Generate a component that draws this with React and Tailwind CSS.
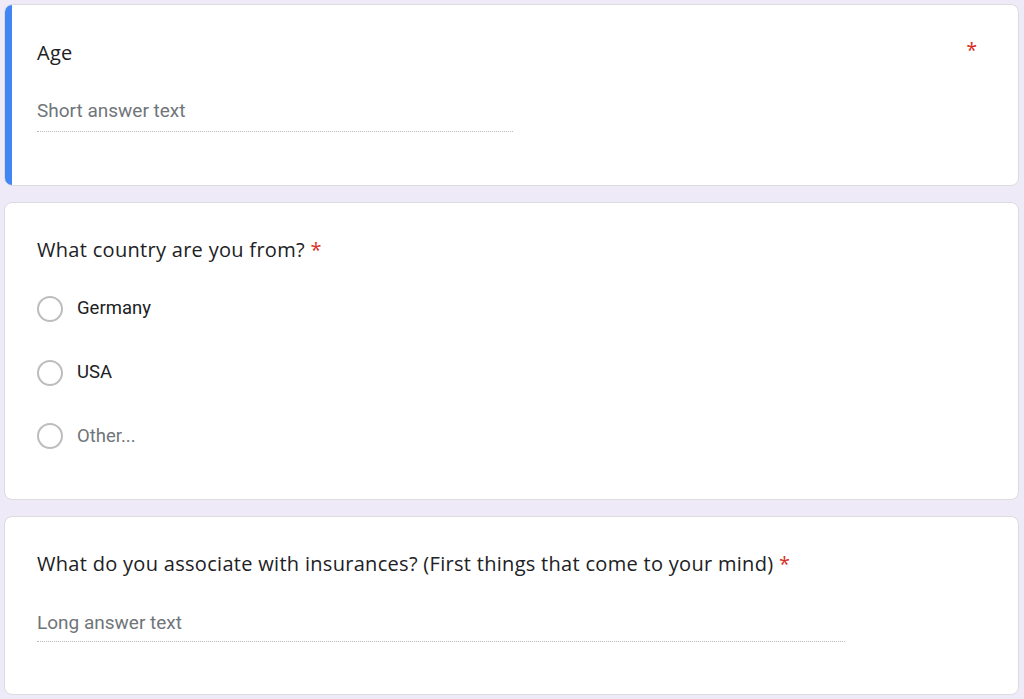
export default function App() {
  const title = "text-[20px] tracking-[0.3px] leading-6 text-[#202124] font-['Open_Sans',sans-serif]";
  const star = "text-[#d93025]";
  const hint = "text-[19px] leading-6 text-[#70757a] font-['Roboto',sans-serif]";

  return (
    <div className="min-h-screen bg-[#eeeaf7] px-1 pt-1 pb-1 pr-[5px] flex flex-col gap-4">
      {/* Age */}
      <div className="relative bg-white rounded-lg border border-[#dadce0] h-[182px] overflow-hidden">
        <div className="absolute left-0 top-0 bottom-0 w-[7px] bg-[#4285f4]" />
        <div className="pl-[32px] pr-10 pt-[36px] flex justify-between">
          <div className={title}>Age</div>
          <div className={`${star} text-[19px] leading-6 -mt-[3px] mr-[1px]`}>*</div>
        </div>
        <div className="pl-[32px] mt-[34px]">
          <div className="w-[476px] border-b border-dotted border-[#bdbdbd] pb-[8px]">
            <span className={hint}>Short answer text</span>
          </div>
        </div>
      </div>

      {/* Country */}
      <div className="bg-white rounded-lg border border-[#dadce0] h-[298px]">
        <div className="pl-[32px] pt-[35px]">
          <div className={title}>
            What country are you from? <span className={star}>*</span>
          </div>
        </div>
        <div className="pl-[32px] pt-[33px] flex flex-col gap-[36px]">
          {["Germany", "USA", "Other..."].map((o, i) => (
            <div key={o} className="flex items-center gap-[14px]">
              <div className="w-[26px] h-[26px] rounded-full border-2 border-[#bdbdbd]" />
              <span
                className={`text-[18.5px] font-['Roboto',sans-serif] ${
                  i === 2 ? "text-[#70757a]" : "text-[#202124]"
                }`}
              >
                {o}
              </span>
            </div>
          ))}
        </div>
      </div>

      {/* Insurances */}
      <div className="bg-white rounded-lg border border-[#dadce0] h-[179px]">
        <div className="pl-[32px] pt-[35px]">
          <div className={title}>
            What do you associate with insurances? (First things that come to your mind){" "}
            <span className={star}>*</span>
          </div>
        </div>
        <div className="pl-[32px] mt-[35px]">
          <div className="w-[808px] border-b border-dotted border-[#bdbdbd] pb-[6px]">
            <span className={hint}>Long answer text</span>
          </div>
        </div>
      </div>
    </div>
  );
}
